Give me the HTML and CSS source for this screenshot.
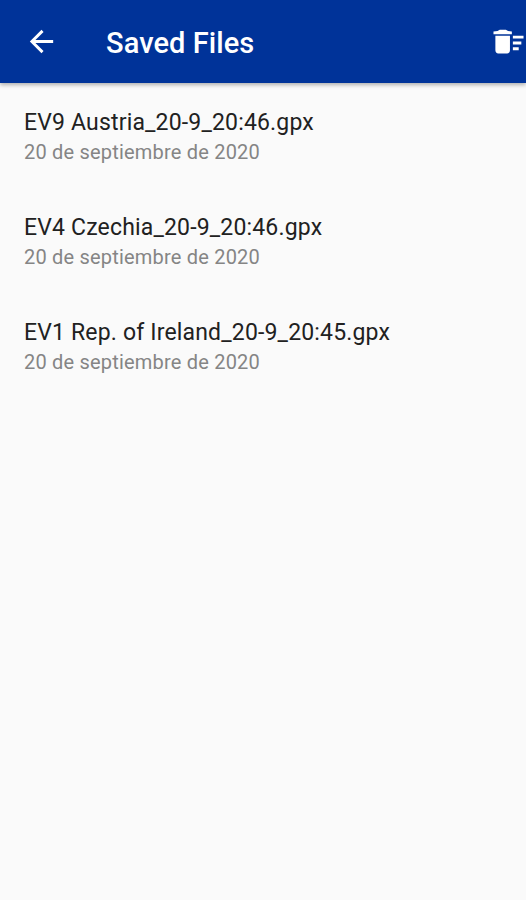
FILE: index.html
```html
<!DOCTYPE html>
<html lang="es">
<head>
<meta charset="utf-8">
<title>Saved Files</title>
<link rel="stylesheet" href="styles.css">
</head>
<body>
<header class="app-bar">
  <svg class="back" viewBox="0 0 24 24"><path d="M20 11H7.83l5.59-5.59L12 4l-8 8 8 8 1.410-1.410L7.830 13H20v-2z"/></svg>
  <h1 class="title">Saved Files</h1>
  <svg class="sweep" viewBox="0 0 24 24"><path d="M15 16h4v2h-4zm0-8h7.300v2H15zm0 4h5.800v2H15zM3 18c0 1.400.8 2.200 2 2.200h6c1.200 0 2-.8 2-2.200V8H3v10zM14.300 5.200l-2.600-.4L10.200 4H6l-1.500.8-2.800.4V7h12.600z"/></svg>
</header>
<main class="files">
  <article class="file"><h2 class="name">EV9 Austria_20-9_20:46.gpx</h2><p class="date">20 de septiembre de 2020</p></article>
  <article class="file"><h2 class="name">EV4 Czechia_20-9_20:46.gpx</h2><p class="date">20 de septiembre de 2020</p></article>
  <article class="file"><h2 class="name">EV1 Rep. of Ireland_20-9_20:45.gpx</h2><p class="date">20 de septiembre de 2020</p></article>
</main>
</body>
</html>
```
FILE: styles.css
```css
* { box-sizing: border-box; }
body { margin: 0; min-height: 900px; overflow: hidden; background: #fafafa; font-family: Roboto, sans-serif; }
h1, h2, p { margin: 0; font-weight: 400; white-space: nowrap; }
.app-bar { display: flex; align-items: center; height: 83px; padding-left: 24px; background: #003399; color: #fff; box-shadow: 0 2px 4px rgba(0, 0, 0, .3); }
.app-bar svg { flex: none; fill: currentColor; }
.back { width: 35px; height: 35px; }
.title { margin-left: 47px; padding-top: 2px; font-size: 29px; font-weight: 500; line-height: 34px; letter-spacing: .08px; }
.sweep { width: 35px; height: 35px; margin-left: auto; }
.files { padding: 21px 24px; }
.file { height: 105px; }
.name { font-size: 23px; line-height: 38px; letter-spacing: .17px; color: #212121; }
.date { margin-top: -1px; font-size: 20px; line-height: 23px; letter-spacing: .2px; color: #858585; }
```
